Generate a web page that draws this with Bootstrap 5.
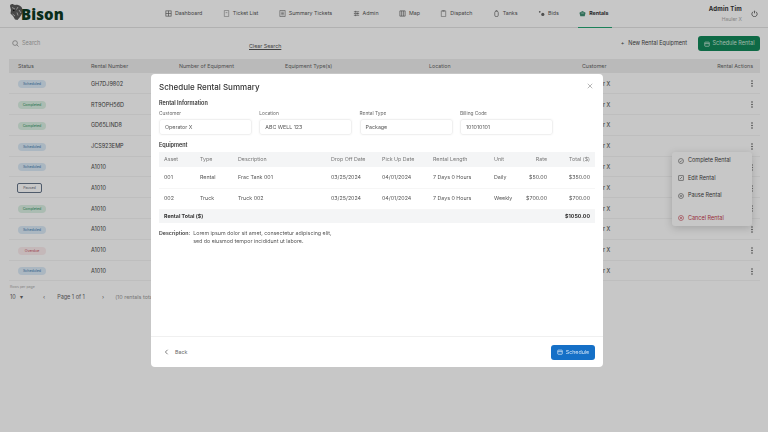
<!DOCTYPE html>
<html lang="en"><head><meta charset="utf-8">
<title>Bison Rentals</title>
<link href="https://cdn.jsdelivr.net/npm/bootstrap@5.3.0/dist/css/bootstrap.min.css" rel="stylesheet">
<style>
html,body{width:768px;height:432px;overflow:hidden}
body{font-family:Inter,"Liberation Sans",sans-serif;font-size:5.4px;color:#333;background:#fff;line-height:1.2}
.topbar{height:28px;border-bottom:1px solid #e3e3e3;padding:0 10px 0 9px}
.brand{width:155px;font-weight:800;font-size:15px;letter-spacing:.1px;color:#0d3a22;font-family:"Open Sans",Inter,sans-serif}
.brand svg{width:16px;height:18px;margin-right:-4px;margin-top:-4px}
.mainnav{gap:18.4px;height:28px}
.mainnav a{color:#555;text-decoration:none;height:28px;display:flex;align-items:center;gap:3px;font-size:5.3px;border-bottom:1.5px solid transparent;padding:0 1px}
.mainnav a.on{font-weight:700;color:#333;border-bottom-color:#25a673;padding:0 4px 0 1px}
.mainnav svg{width:7px;height:7px;flex:none}
.who{margin-left:auto;gap:9px}
.who b{font-size:6px;display:block;letter-spacing:.2px}
.who span{font-size:5px;color:#aaa;display:block;margin-top:3px}
.who svg{width:7px;height:7px}
.toolrow{height:31px;padding:0 8px 0 12px}
.searchbox{width:237px;color:#aaa;gap:3px;font-size:5.5px}
.searchbox svg{width:7px;height:7px}
.clearlink{color:#555;font-size:5.3px;margin-top:6px}
.newbtn{margin-left:auto;gap:4px;margin-right:11px;color:#444;font-size:5.5px}
.greenbtn{background:#12885a;color:#cfe9dc;width:62px;height:15px;border-radius:3px;gap:3px;font-size:5.5px}
.greenbtn svg{width:6px;height:6px}
.grid-wrap{padding:0 8px 0 9px}
.rental-table{table-layout:fixed;width:751px;margin:0;font-size:5.5px;--bs-table-bg:transparent}
.rental-table th{background:#efefef;font-weight:400;color:#666;height:14px;padding:0 0 0 9px;border:0;vertical-align:middle;font-size:5.3px}
.rental-table td{height:20.8px;padding:1.5px 0 0 9px;border-bottom:1px solid #f4f4f4;vertical-align:middle;color:#444}
.c1{width:73px}.c2{width:88px}.c3{width:106px}.c4{width:144px}.c5{width:153px}
.rental-table .kb{text-align:right;padding-right:7px;color:#333}
.rental-table th.kb{font-weight:400;color:#666}
.kebab{display:inline-block;width:2px;height:7px;vertical-align:middle}
.pill{display:inline-block;width:28px;height:8px;line-height:8px;border-radius:4px;text-align:center;font-size:3.6px}
.s-blue{background:#dcebf8;color:#3b78ad}
.s-green{background:#dcf1e5;color:#2b9160}
.s-red{background:#fcecee;color:#c8505d}
.s-out{background:#fff;color:#667;border:.7px solid #66758a;width:25px;height:9.5px;border-radius:2px;margin-left:-1px}
.pager{height:22px;padding:7px 0 0 10px;color:#666;position:relative}
.pager small{position:absolute;left:10px;top:4px;font-size:3.5px;color:#aaa}
.pager .pg-size{width:33px;margin-top:6px;font-size:5.5px}
.pager .pg-mid{width:59px;gap:12px;margin-top:6px;font-size:5.5px}
.pager .pg-next{margin-top:6px;font-size:5.5px}
.pager .pg-total{margin-left:11px;margin-top:6px;color:#999}
.row-menu{position:absolute;left:672px;top:152px;width:80px;height:74px;background:#fff;border-radius:3px;box-shadow:0 2px 8px rgba(0,0,0,.18);font-size:5.5px;color:#444}
.row-menu div{height:17.5px;padding-left:6px;gap:4px;display:flex;align-items:center}
.row-menu div.stop{margin-top:5px;color:#c53a4c}
.row-menu svg{width:6px;height:6px}
.dimmer{position:fixed;inset:0;background:rgba(0,0,0,.22);backdrop-filter:blur(.7px)}
.sheet{position:fixed;left:151px;top:74px;width:452px;height:293px;background:#fff;border-radius:4px;display:flex;flex-direction:column;font-size:5.3px;color:#555}
.sheet-body{flex:1;padding:7px 8px 0 8px;position:relative}
.sheet h1{font-size:8px;font-weight:500;color:#333;margin:0 0 5px;line-height:13px}
.sheet h2{font-size:5.5px;font-weight:600;color:#333;margin:0;line-height:8px}
.xbtn{position:absolute;right:10px;top:9px;width:6px;height:6px}
.fields{display:grid;grid-template-columns:repeat(4,93px);column-gap:7.3px;margin-top:3px;margin-bottom:6px}
.fields label{display:block;font-size:4.8px;color:#666;line-height:6px;margin-bottom:3px}
.fields .fbox{height:16px;border:1px solid #f0f0f0;border-radius:3px;box-shadow:0 0 2px rgba(0,0,0,.06);padding-left:5px;display:flex;align-items:center;color:#555;font-size:5.3px}
.sum-table{table-layout:fixed;width:436px;margin:3px 0 0;font-size:5.3px;--bs-table-bg:transparent;color:#555}
.sum-table th{background:#f4f5f6;font-weight:400;color:#777;height:15px;padding:0 0 0 5px;border:0;vertical-align:middle}
.sum-table td{height:21px;padding:0 0 0 5px;border-bottom:1px solid #f6f6f6;vertical-align:middle;color:#555}
.sum-table th:nth-child(1){width:36px}.sum-table th:nth-child(2){width:38px}.sum-table th:nth-child(3){width:93px}.sum-table th:nth-child(4){width:51px}.sum-table th:nth-child(5){width:51px}.sum-table th:nth-child(6){width:61px}.sum-table th:nth-child(7){width:30px}.sum-table th:nth-child(8){width:33px}
.sum-table .rr{text-align:right;padding:0 5px 0 0}
.sum-table tfoot td{background:#f4f5f6;height:14px;border:0;font-weight:700;color:#333}
.descr{gap:3px;margin-top:6px;line-height:8px;color:#555}
.descr b{font-weight:600;color:#444}
.sheet-foot{height:31px;border-top:1px solid #f0f0f0;padding:0 8px 0 13px;justify-content:space-between}
.backlink{gap:6px;color:#666;font-size:5.3px}
.backlink svg{width:5px;height:6px}
.bluebtn{width:44px;height:15px;background:#1570c7;color:#cfe3f6;border-radius:3px;gap:3px;font-size:5.3px}
.bluebtn svg{width:6px;height:6px}
</style></head>
<body>
<svg width="0" height="0" class="position-absolute"><symbol id="dots" viewBox="0 0 2 7"><circle cx="1" cy="1" r=".7" fill="#333"/><circle cx="1" cy="3.500" r=".7" fill="#333"/><circle cx="1" cy="6" r=".7" fill="#333"/></symbol></svg>
<header class="topbar d-flex align-items-center">
  <div class="brand d-flex align-items-center">
    <svg viewBox="0 0 16 18"><path d="M1 3C1 1.500 3 .5 4.500 1.500 6 2.500 7 1.500 9 2c2 .5 3.500 1.500 4 3 .5 1.500 1 3 .5 5L11 14 8.500 17 6 16.500 4 13 1.500 10.500 2 7Z" fill="#5c5c5c"/><path d="M3 4.500 6 6M9 4 7.500 6.500M3.500 11 6 13M10 7l2 3M8 9.500l1 3" stroke="#bdbdbd" stroke-width="1" fill="none"/><circle cx="4.800" cy="7.500" r=".8" fill="#111"/></svg>Bison
  </div>
  <nav class="mainnav d-flex">
    <a href="#"><svg viewBox="0 0 8 8" fill="none" stroke="#666" stroke-width=".8"><rect x="1" y="1" width="6" height="6"/><path d="M1 4h6M4 1v6"/></svg>Dashboard</a>
    <a href="#"><svg viewBox="0 0 8 8" fill="none" stroke="#999" stroke-width=".8"><path d="M1.500.5h5v7h-5z"/><path d="M3 3h2"/></svg>Ticket List</a>
    <a href="#"><svg viewBox="0 0 8 8" fill="none" stroke="#777" stroke-width=".8"><path d="M1 .5h6v7H1zM2.500 2.500h3M2.500 4h3M2.500 5.500h3"/></svg>Summary Tickets</a>
    <a href="#"><svg viewBox="0 0 8 8" fill="none" stroke="#666" stroke-width=".8"><path d="M1 2h6M1 4h6M1 6h6M3 1v2M5 3v2M3 5v2"/></svg>Admin</a>
    <a href="#"><svg viewBox="0 0 8 8" fill="none" stroke="#666" stroke-width=".8"><path d="M1 1h6v6H1zM3 1v6M5 1v6"/></svg>Map</a>
    <a href="#"><svg viewBox="0 0 8 8" fill="none" stroke="#888" stroke-width=".8"><path d="M1.500 1h5v6.500h-5zM3 .5h2v1H3z"/></svg>Dispatch</a>
    <a href="#"><svg viewBox="0 0 8 8" fill="none" stroke="#666" stroke-width=".8"><rect x="2" y="1.500" width="4" height="6" rx="1.500"/><path d="M3 .5h2"/></svg>Tanks</a>
    <a href="#"><svg viewBox="0 0 8 8" fill="#666"><circle cx="2" cy="2" r="1"/><circle cx="5.500" cy="5" r="1.800"/></svg>Bids</a>
    <a href="#" class="on"><svg viewBox="0 0 8 8" fill="#3f8f73"><path d="M4 1 7.500 3 6.500 7h-5L.5 3Z"/><path d="M2.500 3.500h3" stroke="#fff" stroke-width=".6"/></svg>Rentals</a>
  </nav>
  <div class="who d-flex align-items-center">
    <div class="text-end"><b>Admin Tim</b><span>Hauler X</span></div>
    <svg viewBox="0 0 8 8" fill="none" stroke="#333" stroke-width=".8"><path d="M2.500 2a3 3 0 1 0 3 0M4 .8v3"/></svg>
  </div>
</header>

<div class="toolrow d-flex align-items-center">
  <div class="searchbox d-flex align-items-center"><svg viewBox="0 0 8 8" fill="none" stroke="#888" stroke-width=".8"><circle cx="3.500" cy="3.500" r="2.700"/><path d="m5.500 5.500 2 2"/></svg>Search</div>
  <a href="#" class="clearlink">Clear Search</a>
  <div class="newbtn d-flex align-items-center"><span>+</span>New Rental Equipment</div>
  <div class="greenbtn d-flex align-items-center justify-content-center"><svg viewBox="0 0 8 8" fill="none" stroke="#cfe9dc"><rect x="1" y="1.500" width="6" height="5.500" rx=".6"/><path d="M1 3.500h6"/></svg>Schedule Rental</div>
</div>

<div class="grid-wrap">
<table class="table rental-table">
<thead><tr><th class="c1">Status</th><th class="c2">Rental Number</th><th class="c3">Number of Equipment</th><th class="c4">Equipment Type(s)</th><th class="c5">Location</th><th>Customer</th><th class="kb">Rental Actions</th></tr></thead>
<tbody>
<tr><td><span class="pill s-blue">Scheduled</span></td><td>GH7DJ9802</td><td></td><td></td><td></td><td>Operator X</td><td class="kb"><svg class="kebab"><use href="#dots"/></svg></td></tr>
<tr><td><span class="pill s-green">Completed</span></td><td>RT9OPH56D</td><td></td><td></td><td></td><td>Operator X</td><td class="kb"><svg class="kebab"><use href="#dots"/></svg></td></tr>
<tr><td><span class="pill s-green">Completed</span></td><td>GD65LIND8</td><td></td><td></td><td></td><td>Operator X</td><td class="kb"><svg class="kebab"><use href="#dots"/></svg></td></tr>
<tr><td><span class="pill s-blue">Scheduled</span></td><td>JCS923EMP</td><td></td><td></td><td></td><td>Operator X</td><td class="kb"><svg class="kebab"><use href="#dots"/></svg></td></tr>
<tr><td><span class="pill s-blue">Scheduled</span></td><td>A1010</td><td></td><td></td><td></td><td>Operator X</td><td class="kb"><svg class="kebab"><use href="#dots"/></svg></td></tr>
<tr><td><span class="pill s-out">Paused</span></td><td>A1010</td><td></td><td></td><td></td><td>Operator X</td><td class="kb"><svg class="kebab"><use href="#dots"/></svg></td></tr>
<tr><td><span class="pill s-green">Completed</span></td><td>A1010</td><td></td><td></td><td></td><td>Operator X</td><td class="kb"><svg class="kebab"><use href="#dots"/></svg></td></tr>
<tr><td><span class="pill s-blue">Scheduled</span></td><td>A1010</td><td></td><td></td><td></td><td>Operator X</td><td class="kb"><svg class="kebab"><use href="#dots"/></svg></td></tr>
<tr><td><span class="pill s-red">Overdue</span></td><td>A1010</td><td></td><td></td><td></td><td>Operator X</td><td class="kb"><svg class="kebab"><use href="#dots"/></svg></td></tr>
<tr><td><span class="pill s-blue">Scheduled</span></td><td>A1010</td><td></td><td></td><td></td><td>Operator X</td><td class="kb"><svg class="kebab"><use href="#dots"/></svg></td></tr>
</tbody></table>
</div>

<div class="pager d-flex">
  <small>Rows per page</small>
  <div class="pg-size">10 &nbsp; ▾</div>
  <div class="pg-mid d-flex"><span>‹</span><span>Page 1 of 1</span></div>
  <div class="pg-next"><span>›</span></div>
  <div class="pg-total">(10 rentals total)</div>
</div>

<div class="row-menu">
  <div><svg viewBox="0 0 8 8" fill="none" stroke="#555" stroke-width=".8"><circle cx="4" cy="4" r="3.300"/><path d="m2.500 4 1 1 2-2"/></svg>Complete Rental</div>
  <div><svg viewBox="0 0 8 8" fill="none" stroke="#555" stroke-width=".8"><rect x="1" y="1" width="6" height="6"/><path d="m2.500 5.500 3-3"/></svg>Edit Rental</div>
  <div><svg viewBox="0 0 8 8" fill="none" stroke="#555" stroke-width=".8"><circle cx="4" cy="4" r="3.300"/><path d="M3.200 2.800v2.400M4.800 2.800v2.400"/></svg>Pause Rental</div>
  <div class="stop"><svg viewBox="0 0 8 8" fill="none" stroke="#c53a4c" stroke-width=".8"><circle cx="4" cy="4" r="3.300"/><path d="m2.800 2.800 2.400 2.400M5.200 2.800 2.800 5.200"/></svg>Cancel Rental</div>
</div>

<div class="dimmer"></div>

<section class="sheet">
  <div class="sheet-body">
    <h1>Schedule Rental Summary</h1>
    <svg class="xbtn" viewBox="0 0 8 8" stroke="#888" stroke-width=".8"><path d="m1 1 6 6M7 1 1 7"/></svg>
    <h2>Rental Information</h2>
    <div class="fields">
      <div><label>Customer</label><div class="fbox">Operator X</div></div>
      <div><label>Location</label><div class="fbox">ABC WELL 123</div></div>
      <div><label>Rental Type</label><div class="fbox">Package</div></div>
      <div><label>Billing Code</label><div class="fbox">101010101</div></div>
    </div>
    <h2>Equipment</h2>
    <table class="table sum-table">
      <thead><tr><th>Asset</th><th>Type</th><th>Description</th><th>Drop Off Date</th><th>Pick Up Date</th><th>Rental Length</th><th>Unit</th><th class="rr">Rate</th><th class="rr">Total ($)</th></tr></thead>
      <tbody>
        <tr><td>001</td><td>Rental</td><td>Frac Tank 001</td><td>03/25/2024</td><td>04/01/2024</td><td>7 Days 0 Hours</td><td>Daily</td><td class="rr">$50.00</td><td class="rr">$350.00</td></tr>
        <tr><td>002</td><td>Truck</td><td>Truck 002</td><td>03/25/2024</td><td>04/01/2024</td><td>7 Days 0 Hours</td><td>Weekly</td><td class="rr">$700.00</td><td class="rr">$700.00</td></tr>
      </tbody>
      <tfoot><tr><td colspan="7">Rental Total ($)</td><td colspan="2" class="rr">$1050.00</td></tr></tfoot>
    </table>
    <div class="descr d-flex"><b>Description:</b><span>Lorem ipsum dolor sit amet, consectetur adipiscing elit,<br>sed do eiusmod tempor incididunt ut labore.</span></div>
  </div>
  <div class="sheet-foot d-flex align-items-center">
    <div class="backlink d-flex align-items-center"><svg viewBox="0 0 6 8" fill="none" stroke="#555"><path d="M4.500 1 1.500 4l3 3"/></svg>Back</div>
    <div class="bluebtn d-flex align-items-center justify-content-center"><svg viewBox="0 0 8 8" fill="none" stroke="#cfe3f6"><rect x="1" y="1.500" width="6" height="5.500" rx=".6"/><path d="M1 3.500h6"/></svg>Schedule</div>
  </div>
</section>
<script src="https://cdn.jsdelivr.net/npm/bootstrap@5.3.0/dist/js/bootstrap.bundle.min.js"></script>
</body></html>
